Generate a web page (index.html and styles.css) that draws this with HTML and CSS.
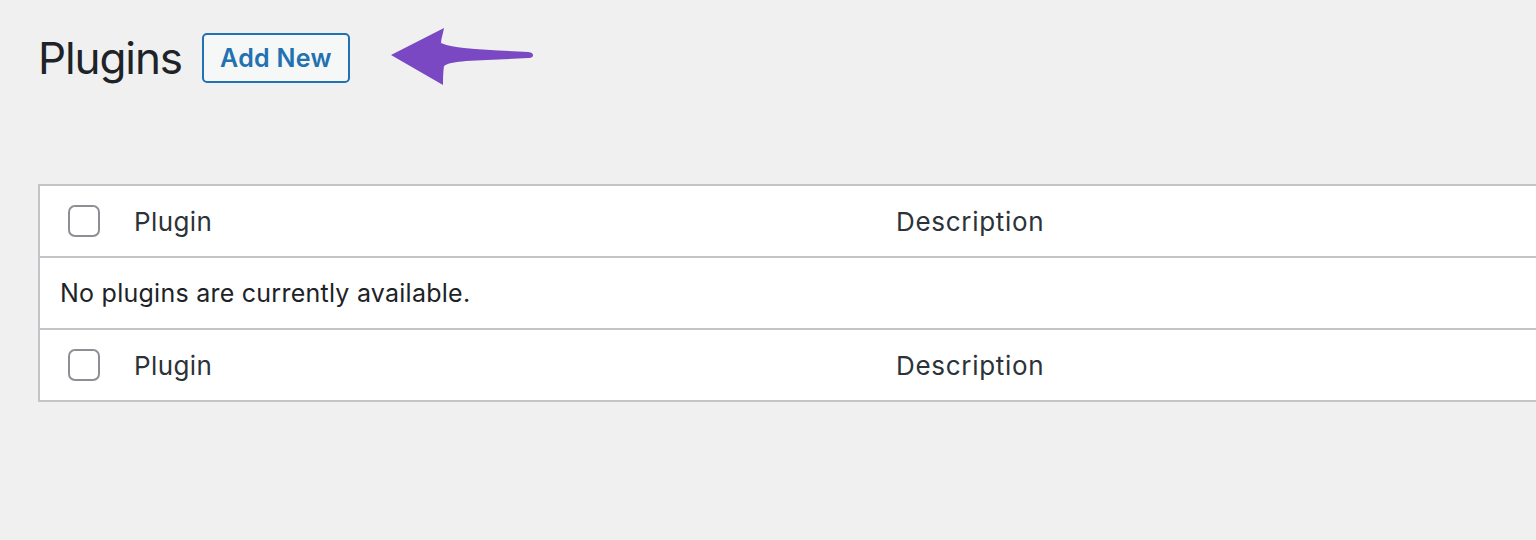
FILE: index.html
```html
<!DOCTYPE html>
<html lang="en">
<head>
<meta charset="utf-8">
<title>Plugins</title>
<link rel="stylesheet" href="styles.css">
</head>
<body>
<div class="wrap">
  <div class="header">
    <h1 class="title">Plugins</h1>
    <a class="add-new" href="#">Add New</a>
    <svg class="arrow" width="155" height="65" viewBox="0 0 155 65" aria-hidden="true">
      <path d="M7 32 L60 5 C59 11 57 16 57 20 C64 23 72 24 80 25 C100 27 125 28 144 29 C148 29.3 149 31 149 32 C149 34 148 35 144 35 C125 36 100 37 82 38 C72 39 64 40 60 43 C59 50 59 56 59 62 Z" fill="#7a48c2"/>
    </svg>
  </div>
  <div class="list">
    <div class="row head">
      <div class="cb"><span class="box"></span></div>
      <div class="col-name">Plugin</div>
      <div class="col-desc">Description</div>
    </div>
    <div class="row body">
      <div class="empty">No plugins are currently available.</div>
    </div>
    <div class="row head">
      <div class="cb"><span class="box"></span></div>
      <div class="col-name">Plugin</div>
      <div class="col-desc">Description</div>
    </div>
  </div>
</div>
</body>
</html>
```
FILE: styles.css
```css
html, body {
  margin: 0;
  padding: 0;
  background: #f0f0f1;
  overflow: hidden;
}
body {
  font-family: Inter, "Liberation Sans", sans-serif;
  color: #1d2327;
}
.wrap {
  padding-left: 38px;
  padding-top: 33px;
}
.header {
  display: flex;
  align-items: center;
  height: 50px;
}
.title {
  margin: 0;
  font-size: 44px;
  font-weight: 400;
  letter-spacing: -1.1px;
  color: #1d2327;
  line-height: 50px;
}
.add-new {
  margin-left: 20px;
  box-sizing: border-box;
  width: 148px;
  height: 50px;
  display: flex;
  align-items: center;
  justify-content: center;
  border: 2px solid #2271b1;
  border-radius: 5px;
  background: #f6f7f7;
  color: #2271b1;
  text-decoration: none;
  font-size: 25px;
  font-weight: 600;
  letter-spacing: 0.3px;
}
.arrow {
  margin-left: 34px;
  margin-top: -6px;
}
.list {
  margin-top: 101px;
  width: 1580px;
  background: #fff;
  border: 2px solid #c3c4c7;
  border-right: none;
}
.row {
  display: flex;
  align-items: center;
  height: 70px;
}
.row + .row {
  border-top: 2px solid #c3c4c7;
}
.cb {
  width: 94px;
  padding-left: 28px;
  box-sizing: border-box;
  display: flex;
  align-items: center;
}
.box {
  display: block;
  width: 32px;
  height: 32px;
  box-sizing: border-box;
  border: 2px solid #8c8f94;
  border-radius: 7px;
  background: #fff;
}
.col-name {
  width: 762px;
  font-size: 26px;
  letter-spacing: 0.4px;
  color: #2c3338;
}
.col-desc {
  font-size: 26px;
  letter-spacing: 0.7px;
  color: #2c3338;
}
.empty {
  padding-left: 20px;
  font-size: 25px;
  letter-spacing: 0.25px;
  color: #1d2327;
}
```
